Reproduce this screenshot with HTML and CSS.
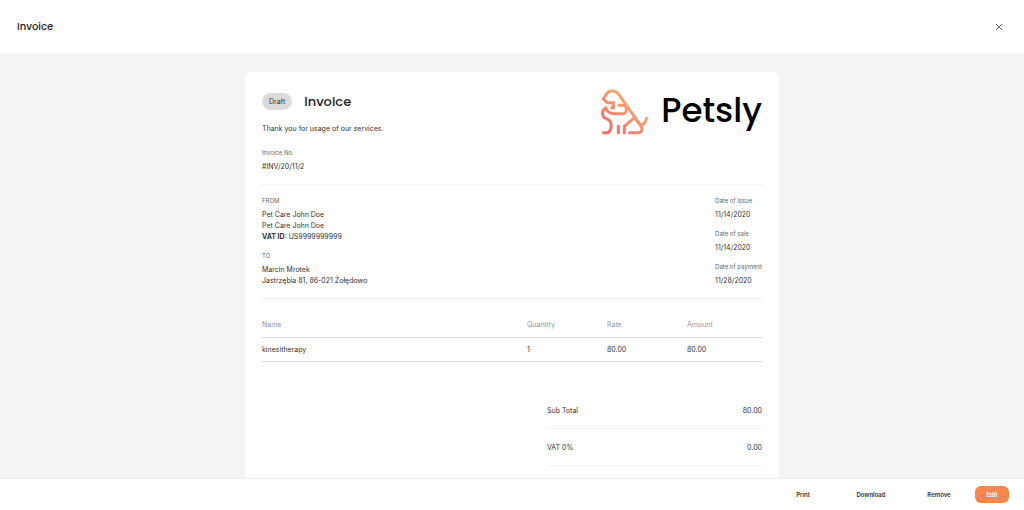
FILE: index.html
```html
<!DOCTYPE html>
<html lang="en">
<head>
    <meta charset="UTF-8">
    <meta name="viewport" content="width=device-width, initial-scale=1.0">
    <title>Invoice</title>
    <link rel="stylesheet" href="styles.css">
</head>
<body>
    <header class="topbar">
        <h1>Invoice</h1>
        <button class="close-button" type="button" aria-label="Close">
            <svg viewBox="0 0 8 8" width="8" height="8">
                <path d="M1 1L7 7M7 1L1 7" />
            </svg>
        </button>
    </header>

    <main class="content">
        <article class="invoice">
            <div class="invoice-head">
                <div class="intro">
                    <div class="title-row">
                        <span class="badge">Draft</span>
                        <h2>Invoice</h2>
                    </div>
                    <p class="thanks">Thank you for usage of our services.</p>
                    <p class="label">Invoice No.</p>
                    <p>#INV/20/11/2</p>
                </div>
                <div class="logo">
                    <svg viewBox="0 0 144 138" width="48" height="46">
                        <defs>
                            <linearGradient id="logo-gradient" gradientUnits="userSpaceOnUse" x1="10" y1="120" x2="90" y2="20">
                                <stop offset="0" stop-color="#ee6c6c" />
                                <stop offset="1" stop-color="#f5b070" />
                            </linearGradient>
                        </defs>
                        <g fill="none" stroke="url(#logo-gradient)" stroke-width="9">
                            <path d="M28 56H37V41H19L7 30L13 21C17 9 26 6 34 6C45 6 51 12 56 20L117 107" />
                            <path d="M50 49H66C80 49 80 74 66 74H40C26 74 18 68 14 57C6 62 3 71 6 80C10 91 20 88 26 95C35 106 30 131 17 131H4" />
                            <path d="M52 108V135M70 135V112L98 88" />
                            <path d="M82 131H112C126 131 125 117 117 107L98 82M117 107C128 110 134 100 138 84" />
                        </g>
                    </svg>
                    <span>Petsly</span>
                </div>
            </div>

            <div class="details">
                <div>
                    <p class="label">FROM</p>
                    <p>Pet Care John Doe</p>
                    <p>Pet Care John Doe</p>
                    <p><strong>VAT ID</strong>: US9999999999</p>
                    <p class="label next">TO</p>
                    <p>Marcin Mrotek</p>
                    <p>Jastrzębia 81, 86-021 Żołędowo</p>
                </div>
                <div class="dates">
                    <p class="label">Date of issue</p>
                    <p>11/14/2020</p>
                    <p class="label next">Date of sale</p>
                    <p>11/14/2020</p>
                    <p class="label next">Date of payment</p>
                    <p>11/28/2020</p>
                </div>
            </div>

            <table class="items">
                <thead>
                    <tr>
                        <th>Name</th>
                        <th class="quantity">Quantity</th>
                        <th class="rate">Rate</th>
                        <th class="amount">Amount</th>
                    </tr>
                </thead>
                <tbody>
                    <tr>
                        <td>kinesitherapy</td>
                        <td>1</td>
                        <td>80.00</td>
                        <td>80.00</td>
                    </tr>
                </tbody>
            </table>

            <dl class="totals">
                <div class="total-row">
                    <dt>Sub Total</dt>
                    <dd>80.00</dd>
                </div>
                <div class="total-row">
                    <dt>VAT 0%</dt>
                    <dd>0.00</dd>
                </div>
            </dl>
        </article>
    </main>

    <footer class="actions">
        <button type="button">Print</button>
        <button type="button">Download</button>
        <button type="button">Remove</button>
        <button class="primary" type="button">Edit</button>
    </footer>
</body>
</html>
```
FILE: styles.css
```css
* {
    box-sizing: border-box;
}

body {
    margin: 0;
    height: 100vh;
    display: flex;
    flex-direction: column;
    background: #fff;
    color: #333;
    font-family: Inter, sans-serif;
    font-size: 7px;
    line-height: 11px;
}

h1, h2, p, dl, dd {
    margin: 0;
}

h1, h2, .logo {
    font-family: Poppins, Inter, sans-serif;
    font-weight: 500;
    color: #222;
}

button {
    border: none;
    background: none;
    font: inherit;
    color: inherit;
    cursor: pointer;
}

.topbar {
    display: flex;
    justify-content: space-between;
    align-items: center;
    padding: 18px 17px;
}

h1 {
    font-size: 10px;
    line-height: 17px;
}

.close-button {
    display: flex;
    padding: 4px;
}

.close-button svg {
    fill: none;
    stroke: #666;
    stroke-width: 1;
}

.content {
    flex: 1;
    min-height: 0;
    overflow-y: auto;
    scrollbar-width: none;
    padding: 19px 16px;
    background: #f4f4f4;
}

.invoice {
    max-width: 534px;
    margin: 0 auto;
    padding: 17px 17px 40px;
    background: #fff;
    border-radius: 6px;
}

.invoice-head {
    display: flex;
    justify-content: space-between;
    align-items: flex-start;
    padding-bottom: 12px;
    border-bottom: 1px solid #f2f2f2;
}

.title-row {
    display: flex;
    align-items: center;
    gap: 12px;
    padding-top: 4px;
}

.badge {
    padding: 3px 7px;
    border-radius: 9px;
    background: #dbdbdb;
}

h2 {
    font-size: 13px;
    line-height: 17px;
}

.thanks {
    margin: 13px 0;
}

.label {
    margin-bottom: 3px;
    font-size: 6px;
    line-height: 11px;
    color: #666;
}

.next {
    margin-top: 8px;
}

.logo {
    display: flex;
    align-items: flex-start;
    gap: 12px;
    color: #000;
    font-size: 34px;
    line-height: 42px;
}

.details {
    display: flex;
    justify-content: space-between;
    padding: 10px 0 12px;
    border-bottom: 1px solid #f2f2f2;
}

.items {
    width: 100%;
    margin-top: 13px;
    border-collapse: collapse;
    table-layout: fixed;
}

.items th,
.items td {
    padding: 6px 0;
    border-bottom: 1px solid #ddd;
    text-align: left;
    font-weight: 400;
}

.items th {
    padding: 7px 0;
    color: #9297a0;
}

.quantity,
.rate {
    width: 16%;
}

.amount {
    width: 15%;
}

.totals {
    width: 43%;
    margin: 30px 0 0 auto;
}

.total-row {
    display: flex;
    justify-content: space-between;
    padding: 13px 0 12px;
    border-bottom: 1px solid #f2f2f2;
}

.actions {
    display: flex;
    justify-content: flex-end;
    align-items: center;
    gap: 4px;
    padding: 7px 15px;
    border-top: 1px solid #eee;
    font-size: 6px;
    font-weight: 600;
}

.actions button {
    min-width: 64px;
    padding: 3px 11px;
}

.actions .primary {
    min-width: 34px;
    border-radius: 6px;
    background: #f5864e;
    color: #fff;
}
```
